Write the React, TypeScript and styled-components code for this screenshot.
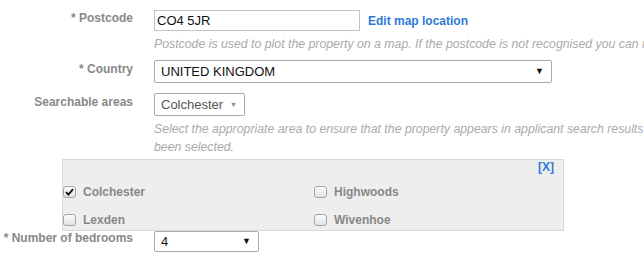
import React from "react";
import styled, {createGlobalStyle} from "styled-components";

const GlobalStyles = createGlobalStyle`
    html, body {
        margin: 0;
        padding: 0;
        background: #fff;
        overflow: hidden;
    }

    body {
        font-family: "Liberation Sans", Arial, sans-serif;
    }
`;

const Form = styled.div`
    display: flex;
    flex-direction: column;
    padding-top: 10px;
    width: 644px;
    overflow: hidden;
`;

const Row = styled.div<{ $gap?: number }>`
    display: grid;
    grid-template-columns: 133px minmax(0, 1fr);
    column-gap: 21px;
    margin-top: ${p => p.$gap ?? 0}px;
`;

const Label = styled.div<{ $offset?: number }>`
    text-align: right;
    font-size: 12px;
    line-height: 14px;
    font-weight: bold;
    color: #888;
    white-space: nowrap;
    padding-top: ${p => p.$offset ?? 2}px;
`;

const Field = styled.div`
    display: flex;
    flex-direction: column;
    align-items: flex-start;
    min-width: 0;
    overflow: hidden;
`;

const Inline = styled.div`
    display: flex;
    align-items: center;
    gap: 8px;
`;

const TextInput = styled.input`
    box-sizing: border-box;
    width: 206px;
    height: 21px;
    margin: 0;
    padding: 0 2px;
    border: 1px solid #c4c4c4;
    border-radius: 0;
    font-family: "Liberation Sans", Arial, sans-serif;
    font-size: 13px;
    color: #111;
    outline: none;
`;

const Link = styled.a`
    font-size: 12px;
    font-weight: bold;
    color: #2f7ad8;
    text-decoration: none;
    cursor: pointer;
`;

const Help = styled.div<{ $top: number }>`
    margin-top: ${p => p.$top}px;
    font-size: 12.3px;
    line-height: 18px;
    font-style: italic;
    color: #aaa;
    white-space: nowrap;
`;

const SelectBox = styled.div<{ $width: number; $height: number; $muted?: boolean }>`
    box-sizing: border-box;
    width: ${p => p.$width}px;
    height: ${p => p.$height}px;
    display: flex;
    align-items: center;
    justify-content: space-between;
    padding: 0 7px 0 6px;
    border: 1px solid #a9a9a9;
    border-radius: 2px;
    background: #fff;
    font-size: 13px;
    color: ${p => (p.$muted ? "#555" : "#111")};
`;

const Arrow = styled.span<{ $muted?: boolean }>`
    font-size: ${p => (p.$muted ? 7 : 9)}px;
    line-height: 1;
    color: ${p => (p.$muted ? "#888" : "#111")};
`;

const AreaPanel = styled.div`
    box-sizing: border-box;
    margin: 3px 0 0 62px;
    width: 502px;
    height: 72px;
    border: 1px solid #d9d9d9;
    background: #eee;
    display: flex;
    flex-direction: column;
`;

const PanelHeader = styled.div`
    height: 20px;
    display: flex;
    justify-content: flex-end;
    padding-right: 9px;
`;

const Close = styled.a`
    font-size: 12px;
    line-height: 14px;
    font-weight: bold;
    color: #2f7ad8;
    cursor: pointer;
`;

const AreaGrid = styled.div`
    display: grid;
    grid-template-columns: 251px 250px;
    grid-auto-rows: 22px;
    row-gap: 6px;
`;

const AreaOption = styled.label`
    display: flex;
    align-items: center;
    gap: 7px;
    padding-top: 1px;
    font-size: 12px;
    font-weight: bold;
    color: #888;
`;

const Box = styled.span`
    box-sizing: border-box;
    width: 13px;
    height: 12px;
    border: 1px solid #a4a4a4;
    border-radius: 3px;
    background: linear-gradient(#fbfbfb, #e2e2e2);
    display: flex;
    align-items: center;
    justify-content: center;
`;

const Check = ({checked}: { checked: boolean }) => (
    <Box>
        {checked && (
            <svg width="9" height="8" viewBox="0 0 9 8">
                <path d="M1 4.2 L3.4 6.6 L8 1.2" stroke="#111" strokeWidth="1.8" fill="none"/>
            </svg>
        )}
    </Box>
);

const areas = [
    {name: "Colchester", checked: true},
    {name: "Highwoods", checked: false},
    {name: "Lexden", checked: false},
    {name: "Wivenhoe", checked: false},
];

export default function App() {
    return (
        <>
            <GlobalStyles/>
            <Form>
                <Row>
                    <Label $offset={1}>* Postcode</Label>
                    <Field>
                        <Inline>
                            <TextInput value="CO4 5JR" readOnly/>
                            <Link>Edit map location</Link>
                        </Inline>
                        <Help $top={4}>
                            Postcode is used to plot the property on a map. If the postcode is not recognised you can manually set the location on the map.
                        </Help>
                    </Field>
                </Row>

                <Row $gap={7}>
                    <Label>* Country</Label>
                    <Field>
                        <SelectBox $width={398} $height={23}>
                            UNITED KINGDOM
                            <Arrow>▼</Arrow>
                        </SelectBox>
                    </Field>
                </Row>

                <Row $gap={10}>
                    <Label>Searchable areas</Label>
                    <Field>
                        <SelectBox $width={91} $height={23} $muted>
                            Colchester
                            <Arrow $muted>▼</Arrow>
                        </SelectBox>
                        <Help $top={4}>
                            Select the appropriate area to ensure that the property appears in applicant search results when any of these areas have
                            <br/>
                            been selected.
                        </Help>
                    </Field>
                </Row>

                <AreaPanel>
                    <PanelHeader>
                        <Close>[X]</Close>
                    </PanelHeader>
                    <AreaGrid>
                        {areas.map(a => (
                            <AreaOption key={a.name}>
                                <Check checked={a.checked}/>
                                {a.name}
                            </AreaOption>
                        ))}
                    </AreaGrid>
                </AreaPanel>

                <Row>
                    <Label $offset={-1}>* Number of bedrooms</Label>
                    <Field>
                        <SelectBox $width={105} $height={21}>
                            4
                            <Arrow>▼</Arrow>
                        </SelectBox>
                    </Field>
                </Row>
            </Form>
        </>
    );
}
